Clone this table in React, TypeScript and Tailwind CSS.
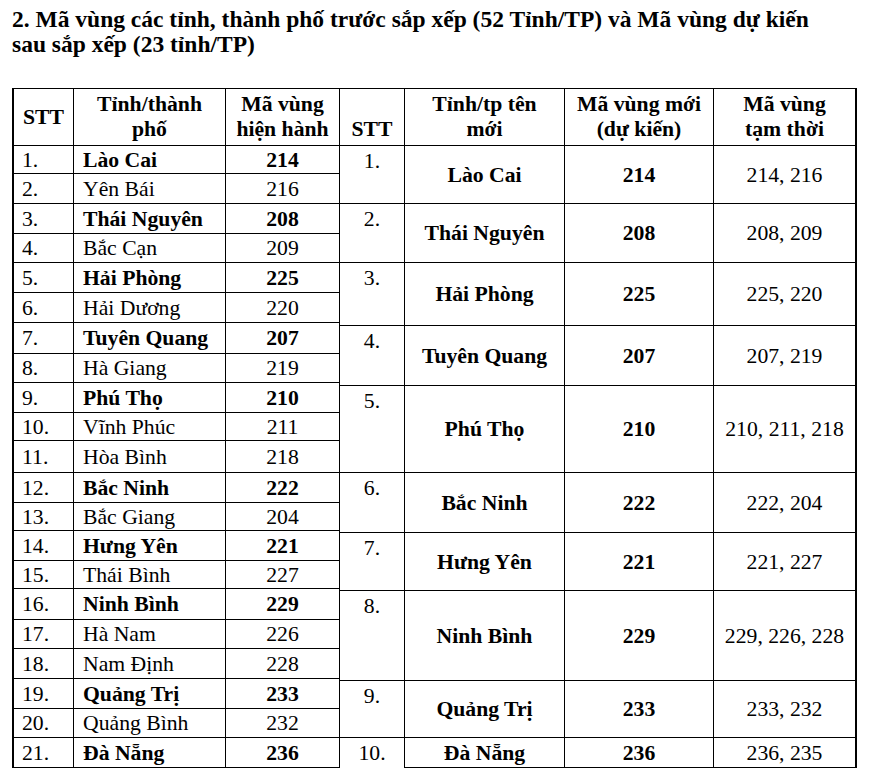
type Row = { stt: string; name: string; code: string; main: boolean; h: string };
type Group = { stt: string; name: string; code: string; temp: string; h: string; last?: boolean };

const rows: Row[] = [
  { stt: "1.", name: "Lào Cai", code: "214", main: true, h: "h-[28px]" },
  { stt: "2.", name: "Yên Bái", code: "216", main: false, h: "h-[30px]" },
  { stt: "3.", name: "Thái Nguyên", code: "208", main: true, h: "h-[30px]" },
  { stt: "4.", name: "Bắc Cạn", code: "209", main: false, h: "h-[29px]" },
  { stt: "5.", name: "Hải Phòng", code: "225", main: true, h: "h-[30px]" },
  { stt: "6.", name: "Hải Dương", code: "220", main: false, h: "h-[30px]" },
  { stt: "7.", name: "Tuyên Quang", code: "207", main: true, h: "h-[31px]" },
  { stt: "8.", name: "Hà Giang", code: "219", main: false, h: "h-[29px]" },
  { stt: "9.", name: "Phú Thọ", code: "210", main: true, h: "h-[30px]" },
  { stt: "10.", name: "Vĩnh Phúc", code: "211", main: false, h: "h-[28px]" },
  { stt: "11.", name: "Hòa Bình", code: "218", main: false, h: "h-[32px]" },
  { stt: "12.", name: "Bắc Ninh", code: "222", main: true, h: "h-[30px]" },
  { stt: "13.", name: "Bắc Giang", code: "204", main: false, h: "h-[28px]" },
  { stt: "14.", name: "Hưng Yên", code: "221", main: true, h: "h-[30px]" },
  { stt: "15.", name: "Thái Bình", code: "227", main: false, h: "h-[28px]" },
  { stt: "16.", name: "Ninh Bình", code: "229", main: true, h: "h-[31px]" },
  { stt: "17.", name: "Hà Nam", code: "226", main: false, h: "h-[29px]" },
  { stt: "18.", name: "Nam Định", code: "228", main: false, h: "h-[30px]" },
  { stt: "19.", name: "Quảng Trị", code: "233", main: true, h: "h-[30px]" },
  { stt: "20.", name: "Quảng Bình", code: "232", main: false, h: "h-[29px]" },
  { stt: "21.", name: "Đà Nẵng", code: "236", main: true, h: "h-[30px]" },
];

const groups: Group[] = [
  { stt: "1.", name: "Lào Cai", code: "214", temp: "214, 216", h: "h-[58px]" },
  { stt: "2.", name: "Thái Nguyên", code: "208", temp: "208, 209", h: "h-[59px]" },
  { stt: "3.", name: "Hải Phòng", code: "225", temp: "225, 220", h: "h-[63px]" },
  { stt: "4.", name: "Tuyên Quang", code: "207", temp: "207, 219", h: "h-[60px]" },
  { stt: "5.", name: "Phú Thọ", code: "210", temp: "210, 211, 218", h: "h-[87px]" },
  { stt: "6.", name: "Bắc Ninh", code: "222", temp: "222, 204", h: "h-[60px]" },
  { stt: "7.", name: "Hưng Yên", code: "221", temp: "221, 227", h: "h-[58px]" },
  { stt: "8.", name: "Ninh Bình", code: "229", temp: "229, 226, 228", h: "h-[90px]" },
  { stt: "9.", name: "Quảng Trị", code: "233", temp: "233, 232", h: "h-[57px]" },
  { stt: "10.", name: "Đà Nẵng", code: "236", temp: "236, 235", h: "h-[30px]", last: true },
];

export default function App() {
  return (
    <div className="min-h-[784px] w-[870px] bg-white pl-[12px] pt-[7px] font-['Liberation_Serif','Times_New_Roman',serif] text-black">
      <h2 className="text-[23.5px] font-bold leading-[25px]">
        2. Mã vùng các tỉnh, thành phố trước sắp xếp (52 Tỉnh/TP) và Mã vùng dự kiến
        <br />
        sau sắp xếp (23 tỉnh/TP)
      </h2>

      <div className="mt-[31px] flex text-[21.7px] leading-[24px]">
        {/* before merge */}
        <div className="w-[328px] border-t border-l-2 border-black">
          <div className="flex h-[57px] border-b border-black font-bold">
            <div className="flex w-[60px] items-center justify-center border-r border-black">STT</div>
            <div className="flex w-[152px] items-end justify-center border-r border-black pb-[3px] text-center leading-[25px]">
              Tỉnh/thành
              <br />
              phố
            </div>
            <div className="flex w-[114px] items-end justify-center border-r border-black pb-[3px] text-center leading-[25px]">
              Mã vùng
              <br />
              hiện hành
            </div>
          </div>
          {rows.map((r) => (
            <div key={r.stt} className={`flex ${r.h} border-b border-black ${r.main ? "font-bold" : ""}`}>
              <div className="flex w-[60px] items-center border-r border-black pl-[8px] font-normal">{r.stt}</div>
              <div className="flex w-[152px] items-center border-r border-black pl-[9px]">{r.name}</div>
              <div className="flex w-[114px] items-center justify-center border-r border-black">{r.code}</div>
            </div>
          ))}
        </div>

        {/* after merge */}
        <div className="w-[517px] border-t border-black">
          <div className="flex h-[57px] border-b border-black font-bold leading-[25px]">
            <div className="flex w-[65px] items-end justify-center border-r border-black pb-[3px]">STT</div>
            <div className="flex w-[160px] items-end justify-center border-r border-black pb-[3px] text-center">
              Tỉnh/tp tên
              <br />
              mới
            </div>
            <div className="flex w-[149px] items-end justify-center border-r border-black pb-[3px] text-center">
              Mã vùng mới
              <br />
              (dự kiến)
            </div>
            <div className="flex w-[143px] items-end justify-center border-r-2 border-black pb-[3px] text-center">
              Mã vùng
              <br />
              tạm thời
            </div>
          </div>
          {groups.map((g) => (
            <div key={g.stt} className={`flex ${g.h}`}>
              <div
                className={`flex w-[65px] justify-center border-r border-black ${g.last ? "items-center" : "border-b pt-[3px]"}`}
              >
                {g.stt}
              </div>
              <div className="flex w-[160px] items-center justify-center border-r border-b border-black font-bold">
                {g.name}
              </div>
              <div className="flex w-[149px] items-center justify-center border-r border-b border-black font-bold">
                {g.code}
              </div>
              <div className="flex w-[143px] items-center justify-center border-r-2 border-b border-black">
                {g.temp}
              </div>
            </div>
          ))}
        </div>
      </div>
    </div>
  );
}
